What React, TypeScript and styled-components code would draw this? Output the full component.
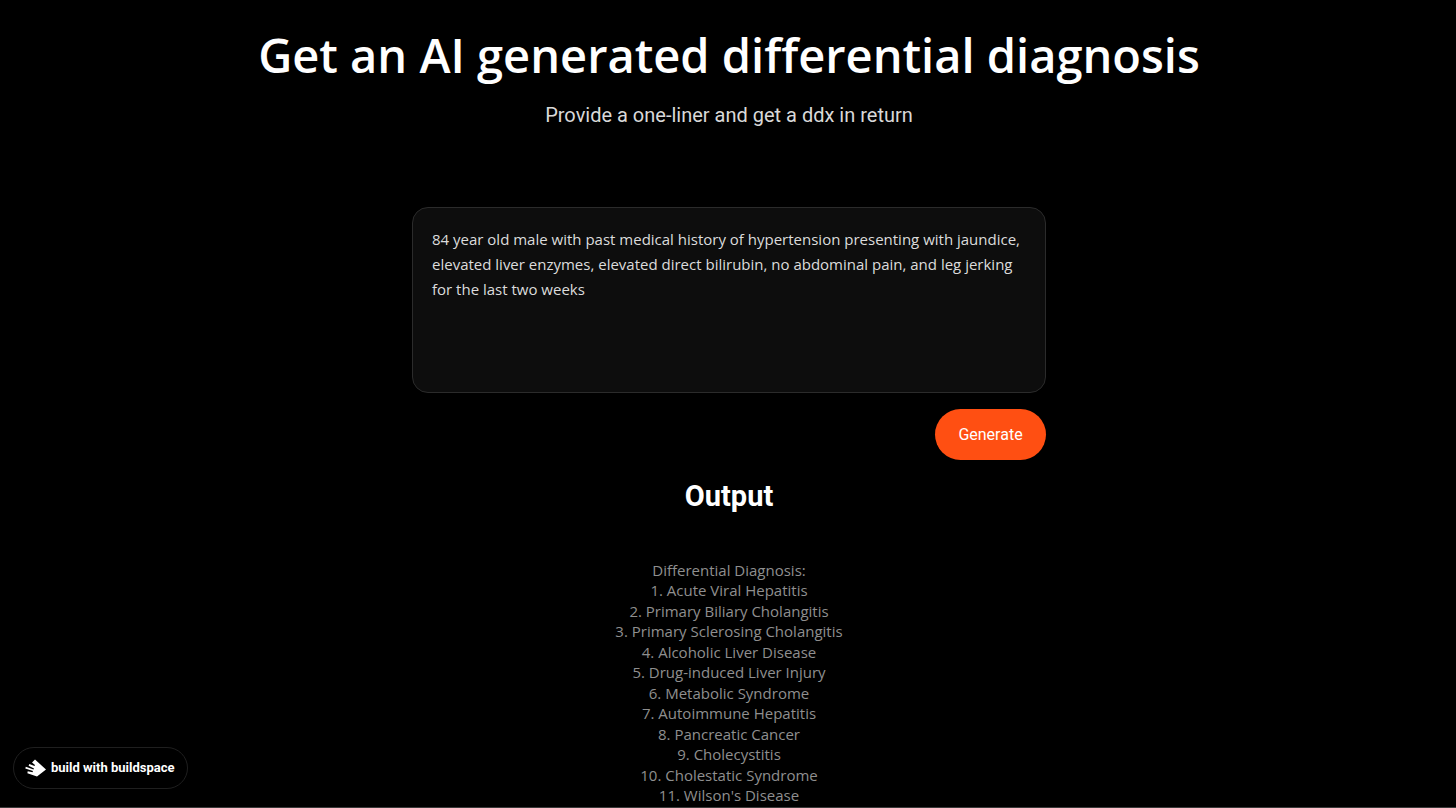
import React, { useState } from "react";
import styled, { createGlobalStyle } from "styled-components";

const GlobalStyle = createGlobalStyle`
  *, *::before, *::after { box-sizing: border-box; }
  body {
    margin: 0;
    background: #000;
    color: #fff;
    font-family: "Open Sans", "Noto Sans", sans-serif;
  }
`;

const Page = styled.main`
  display: flex;
  flex-direction: column;
  align-items: center;
  min-height: 100vh;
  padding: 27px 14px 2px 16px;
  border-bottom: 1px solid #3a3a3a;
`;

const Header = styled.header`
  display: flex;
  flex-direction: column;
  gap: 20px;
  text-align: center;
`;

const Title = styled.h1`
  margin: 0;
  font-size: 47px;
  font-weight: 600;
  line-height: 56px;
`;

const Subtitle = styled.h2`
  margin: 0;
  color: #d9d9d9;
  font-family: Roboto, sans-serif;
  font-size: 20px;
  font-weight: 400;
  line-height: 24px;
`;

const PromptForm = styled.form`
  display: flex;
  flex-direction: column;
  align-items: flex-end;
  gap: 16px;
  width: 100%;
  max-width: 634px;
  margin-top: 80px;
`;

const PromptBox = styled.textarea`
  display: block;
  width: 100%;
  height: 186px;
  padding: 19px;
  border: 1px solid #2b2b2b;
  border-radius: 16px;
  outline: none;
  resize: none;
  background: #0d0d0d;
  color: #dcdcdc;
  font-family: inherit;
  font-size: 15px;
  line-height: 25px;
`;

const GenerateButton = styled.button`
  min-width: 111px;
  height: 51px;
  padding: 0 23px;
  border: 0;
  border-radius: 26px;
  background: #ff4f12;
  color: #fff;
  font-family: Roboto, sans-serif;
  font-size: 16px;
  font-weight: 400;
  line-height: 20px;
  cursor: pointer;
`;

const Output = styled.section`
  display: flex;
  flex: 1;
  flex-direction: column;
  align-items: center;
  gap: 46px;
  margin-top: 18px;
`;

const OutputTitle = styled.h3`
  margin: 0;
  font-family: Roboto, sans-serif;
  font-size: 29px;
  font-weight: 700;
  line-height: 36px;
`;

const Result = styled.div`
  display: flex;
  flex: 1;
  flex-direction: column;
  justify-content: space-between;
  color: #8f8f8f;
  font-size: 15px;
  line-height: 20px;
  text-align: center;
`;

const ResultLine = styled.p`
  margin: 0;
`;

const Badge = styled.a`
  position: fixed;
  bottom: 19px;
  left: 13px;
  display: flex;
  align-items: center;
  gap: 5px;
  height: 42px;
  padding: 0 13px 0 11px;
  border: 1px solid #1f1f1f;
  border-radius: 21px;
  background: #000;
  color: #fff;
  font-family: Roboto, sans-serif;
  font-size: 13px;
  font-weight: 700;
  line-height: 16px;
  text-decoration: none;
`;

const lines = [
  "Differential Diagnosis:",
  "1. Acute Viral Hepatitis",
  "2. Primary Biliary Cholangitis",
  "3. Primary Sclerosing Cholangitis",
  "4. Alcoholic Liver Disease",
  "5. Drug-induced Liver Injury",
  "6. Metabolic Syndrome",
  "7. Autoimmune Hepatitis",
  "8. Pancreatic Cancer",
  "9. Cholecystitis",
  "10. Cholestatic Syndrome",
  "11. Wilson's Disease",
];

const BuildspaceLogo = () => (
  <svg width="21" height="18" viewBox="0 0 21 18" aria-hidden="true">
    <path
      fill="#fff"
      d="M10 .4 21 10.4 12 17.6 2.4 14.2 2.7 12.2 7.5 13.2 8 12.1.3 9.6.8 7.8 8.5 10.5 9 9.4 3.6 6.8 4.4 5.1 9.5 7.1 10 6.1 7 3.6Z"
    />
  </svg>
);

export default function App() {
  const [prompt, setPrompt] = useState(
    "84 year old male with past medical history of hypertension presenting with jaundice, elevated liver enzymes, elevated direct bilirubin, no abdominal pain, and leg jerking for the last two weeks"
  );

  return (
    <>
      <GlobalStyle />
      <Page>
        <Header>
          <Title>Get an AI generated differential diagnosis</Title>
          <Subtitle>Provide a one-liner and get a ddx in return</Subtitle>
        </Header>
        <PromptForm onSubmit={(e) => e.preventDefault()}>
          <PromptBox
            aria-label="Patient one-liner"
            spellCheck={false}
            value={prompt}
            onChange={(e) => setPrompt(e.target.value)}
          />
          <GenerateButton type="submit">Generate</GenerateButton>
        </PromptForm>
        <Output>
          <OutputTitle>Output</OutputTitle>
          <Result>
            {lines.map((line) => (
              <ResultLine key={line}>{line}</ResultLine>
            ))}
          </Result>
        </Output>
      </Page>
      <Badge href="#buildspace">
        <BuildspaceLogo />
        build with buildspace
      </Badge>
    </>
  );
}
